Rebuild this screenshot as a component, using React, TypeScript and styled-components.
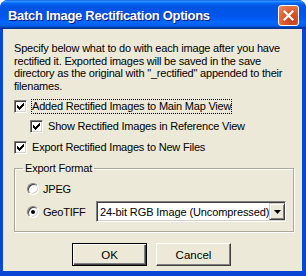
import styled, { createGlobalStyle } from 'styled-components';
import { useState } from 'react';

const GlobalStyle = createGlobalStyle`
  html, body {
    margin: 0;
    padding: 0;
    background: #ffffff;
  }
`;

const FACE = '#ECE9D8';

export default function App() {
  const [addMain, setAddMain] = useState(true);
  const [showRef, setShowRef] = useState(true);
  const [exportFiles, setExportFiles] = useState(true);
  const [format, setFormat] = useState<'jpeg' | 'tiff'>('tiff');

  return (
    <>
      <GlobalStyle />
      <Window>
        <TitleBar>
          <Title>Batch Image Rectification Options</Title>
          <CloseButton aria-label="Close">
            <svg width="11" height="11" viewBox="0 0 11 11">
              <path d="M1.5 1.5 L9.5 9.5 M9.5 1.5 L1.5 9.5" stroke="#fff" strokeWidth="2.2" strokeLinecap="square" />
            </svg>
          </CloseButton>
        </TitleBar>
        <Body>
          <Intro>
            Specify below what to do with each image after you have rectified it. Exported images will be saved in the save
            directory as the original with "_rectified" appended to their filenames.
          </Intro>
          <CheckRow $indent={0} $top={6} onClick={() => setAddMain(!addMain)}>
            <CheckBox checked={addMain} />
            <Label $focused>Added Rectified Images to Main Map View</Label>
          </CheckRow>
          <CheckRow $indent={16} $top={4} onClick={() => setShowRef(!showRef)}>
            <CheckBox checked={showRef} />
            <Label>Show Rectified Images in Reference View</Label>
          </CheckRow>
          <CheckRow $indent={0} $top={5} onClick={() => setExportFiles(!exportFiles)}>
            <CheckBox checked={exportFiles} />
            <Label>Export Rectified Images to New Files</Label>
          </CheckRow>
          <Group>
            <Legend>Export Format</Legend>
            <RadioRow onClick={() => setFormat('jpeg')}>
              <Radio $on={format === 'jpeg'} />
              <RadioLabel>JPEG</RadioLabel>
            </RadioRow>
            <RadioRow $top={6}>
              <RadioHit onClick={() => setFormat('tiff')}>
                <Radio $on={format === 'tiff'} />
                <RadioLabel>GeoTIFF</RadioLabel>
              </RadioHit>
              <Select>
                <SelectText>24-bit RGB Image (Uncompressed)</SelectText>
                <ArrowButton>
                  <svg width="7" height="4" viewBox="0 0 7 4">
                    <path d="M0 0 H7 L3.5 4 Z" fill="#000" />
                  </svg>
                </ArrowButton>
              </Select>
            </RadioRow>
          </Group>
          <Buttons>
            <Button $default>OK</Button>
            <Button>Cancel</Button>
          </Buttons>
        </Body>
      </Window>
    </>
  );
}

function CheckBox({ checked }: { checked: boolean }) {
  return (
    <Box>
      {checked && (
        <svg width="7" height="7" viewBox="0 0 7 7" shapeRendering="crispEdges">
          <path d="M0 2h1v3H0z M1 3h1v3H1z M2 4h1v3H2z M3 3h1v3H3z M4 2h1v3H4z M5 1h1v3H5z M6 0h1v3H6z" fill="#000" />
        </svg>
      )}
    </Box>
  );
}

const Window = styled.div`
  width: 306px;
  height: 276px;
  box-sizing: border-box;
  display: flex;
  flex-direction: column;
  background: #0A45D6;
  border-radius: 8px 8px 0 0;
  overflow: hidden;
  font-family: "Liberation Sans", Arial, sans-serif;
`;

const TitleBar = styled.div`
  height: 29px;
  flex: none;
  display: flex;
  align-items: center;
  justify-content: space-between;
  padding: 0 7px 0 8px;
  background: linear-gradient(to bottom, #0058EE 0%, #3593FF 4%, #288EFF 6%, #127DFF 8%, #036FFC 10%, #0262EE 14%, #0057E5 20%, #0054E3 24%, #0055EB 56%, #005BF5 66%, #026AFE 76%, #0062EF 86%, #0052D6 92%, #0040AB 94%, #003092 100%);
`;

const Title = styled.div`
  color: #ffffff;
  font-family: "Liberation Sans", Arial, sans-serif;
  font-weight: bold;
  font-size: 13px;
  letter-spacing: -0.3px;
  text-shadow: 1px 1px #0A1883;
  padding-top: 1px;
`;

const CloseButton = styled.button`
  width: 21px;
  height: 21px;
  padding: 0;
  display: flex;
  align-items: center;
  justify-content: center;
  border: 1px solid #ffffff;
  border-radius: 3px;
  background: radial-gradient(circle at 70% 75%, #C53D1C 0%, #DD5A2C 45%, #EE8A66 100%);
  margin-top: 1px;
`;

const Body = styled.div`
  flex: 1;
  margin: 0 4px 5px 3px;
  background: ${FACE};
  padding: 13px 8px 0 11px;
  display: flex;
  flex-direction: column;
  color: #000;
  font-family: "Liberation Sans", Arial, sans-serif;
  font-size: 11px;
  letter-spacing: -0.2px;
`;

const Intro = styled.p`
  margin: 0;
  line-height: 12.5px;
  width: 276px;
`;

const CheckRow = styled.div<{ $indent: number; $top: number }>`
  display: flex;
  align-items: center;
  margin-top: ${(p) => p.$top}px;
  margin-left: ${(p) => p.$indent}px;
  height: 16px;
  cursor: default;
`;

const Box = styled.span`
  width: 13px;
  height: 13px;
  box-sizing: border-box;
  flex: none;
  display: flex;
  align-items: center;
  justify-content: center;
  background: #ffffff;
  border: 1px solid;
  border-color: #808080 #ffffff #ffffff #808080;
  box-shadow: inset 1px 1px #404040, inset -1px -1px #D4D0C8;
`;

const Label = styled.span<{ $focused?: boolean }>`
  margin-left: 4px;
  padding: 1px 1px 2px;
  outline: ${(p) => (p.$focused ? '1px dotted #000' : 'none')};
  outline-offset: -1px;
  white-space: nowrap;
`;

const Group = styled.fieldset`
  margin: 7px 0 0 0;
  padding: 9px 0 9px 12px;
  width: 280px;
  box-sizing: border-box;
  border: 1px solid #ACA899;
  box-shadow: 1px 1px #ffffff, inset 1px 1px #ffffff;
  border-radius: 0;
  min-width: 0;
`;

const Legend = styled.legend`
  padding: 0 2px;
  margin-left: -4px;
`;

const RadioRow = styled.div<{ $top?: number }>`
  display: flex;
  align-items: center;
  margin-top: ${(p) => p.$top ?? 0}px;
`;

const RadioHit = styled.div`
  display: flex;
  align-items: center;
  width: 69px;
`;

const Radio = styled.span<{ $on: boolean }>`
  width: 12px;
  height: 12px;
  box-sizing: border-box;
  flex: none;
  border-radius: 50%;
  background: #ffffff;
  border: 1px solid;
  border-color: #808080 #ffffff #ffffff #808080;
  box-shadow: inset 1px 1px #404040, inset -1px -1px #D4D0C8;
  display: flex;
  align-items: center;
  justify-content: center;

  &::after {
    content: '';
    width: 4px;
    height: 4px;
    border-radius: 50%;
    background: ${(p) => (p.$on ? '#000' : 'transparent')};
  }
`;

const RadioLabel = styled.span`
  margin-left: 4px;
`;

const Select = styled.div`
  width: 190px;
  height: 21px;
  flex: none;
  box-sizing: border-box;
  display: flex;
  align-items: center;
  justify-content: space-between;
  background: #ffffff;
  border: 1px solid;
  border-color: #808080 #ffffff #ffffff #808080;
  box-shadow: inset 1px 1px #404040, inset -1px -1px #D4D0C8;
  padding: 2px;
`;

const SelectText = styled.span`
  padding-left: 1px;
  font-size: 11px;
  letter-spacing: -0.1px;
  white-space: nowrap;
`;

const ArrowButton = styled.span`
  width: 16px;
  height: 17px;
  flex: none;
  box-sizing: border-box;
  display: flex;
  align-items: center;
  justify-content: center;
  background: ${FACE};
  border: 1px solid;
  border-color: #D4D0C8 #404040 #404040 #D4D0C8;
  box-shadow: inset 1px 1px #ffffff, inset -1px -1px #808080;
`;

const Buttons = styled.div`
  display: flex;
  gap: 9px;
  margin-top: 11px;
  padding-left: 58px;
`;

const Button = styled.button<{ $default?: boolean }>`
  width: 75px;
  height: 23px;
  box-sizing: border-box;
  padding: 0;
  font-family: "Liberation Sans", Arial, sans-serif;
  font-size: 11.5px;
  color: #000;
  background: ${FACE};
  border: 1px solid;
  border-color: ${(p) => (p.$default ? '#000 #000 #000 #000' : '#ffffff #404040 #404040 #ffffff')};
  box-shadow: ${(p) =>
    p.$default
      ? 'inset 1px 1px #ffffff, inset -1px -1px #404040, inset -2px -2px #808080'
      : 'inset -1px -1px #808080'};
`;
